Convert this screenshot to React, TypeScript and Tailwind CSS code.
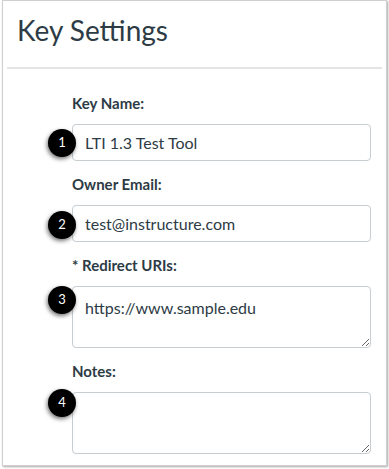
import type { ReactNode } from 'react'

function Badge({ n, top }: { n: number; top: number }) {
  return (
    <span
      className="absolute left-[-24px] w-[28px] h-[28px] rounded-full bg-black text-white text-[13px] flex items-center justify-center shadow-[-1px_2px_4px_rgba(0,0,0,0.55)]"
      style={{ top }}
    >
      {n}
    </span>
  )
}

function Field({ label, children }: { label: string; children: ReactNode }) {
  return (
    <div className="flex flex-col gap-[11px]">
      <label className="block text-[15px] leading-5 font-bold text-[#2d3b45]">{label}</label>
      <div className="relative">{children}</div>
    </div>
  )
}

export default function App() {
  const input =
    'w-full h-[37px] rounded-[4px] border border-[#c7cdd1] bg-white px-3 text-[16px] text-[#2d3b45] outline-none'
  const area =
    'block w-full h-[62px] rounded-[4px] border border-[#c7cdd1] bg-white px-3 pt-[9px] text-[16px] leading-6 text-[#2d3b45] outline-none'

  return (
    <div className="w-[389px] h-[469px] bg-white font-['Lato','Liberation_Sans',sans-serif]">
      <div className="ml-[2px] w-[385px] h-[466px] border border-[#cfcfcf] shadow-[1px_1px_2px_rgba(0,0,0,0.35)] bg-white">
        <h1 className="pl-[14px] pt-[12px] h-[66px] text-[28px] leading-[34px] text-[#2d3b45]">Key Settings</h1>
        <div className="mx-[4px] h-[2px] bg-[#e2e4e5]" />
        <div className="flex flex-col gap-[13px] pl-[69px] pr-[15px] pt-[24px]">
          <Field label="Key Name:">
            <Badge n={1} top={5} />
            <input className={input} defaultValue="LTI 1.3 Test Tool" />
          </Field>
          <Field label="Owner Email:">
            <Badge n={2} top={6} />
            <input className={input} defaultValue="test@instructure.com" />
          </Field>
          <Field label="* Redirect URIs:">
            <Badge n={3} top={0} />
            <textarea className={area} defaultValue="https://www.sample.edu" />
          </Field>
          <Field label="Notes:">
            <Badge n={4} top={-3} />
            <textarea className={area} defaultValue="" />
          </Field>
        </div>
      </div>
    </div>
  )
}
